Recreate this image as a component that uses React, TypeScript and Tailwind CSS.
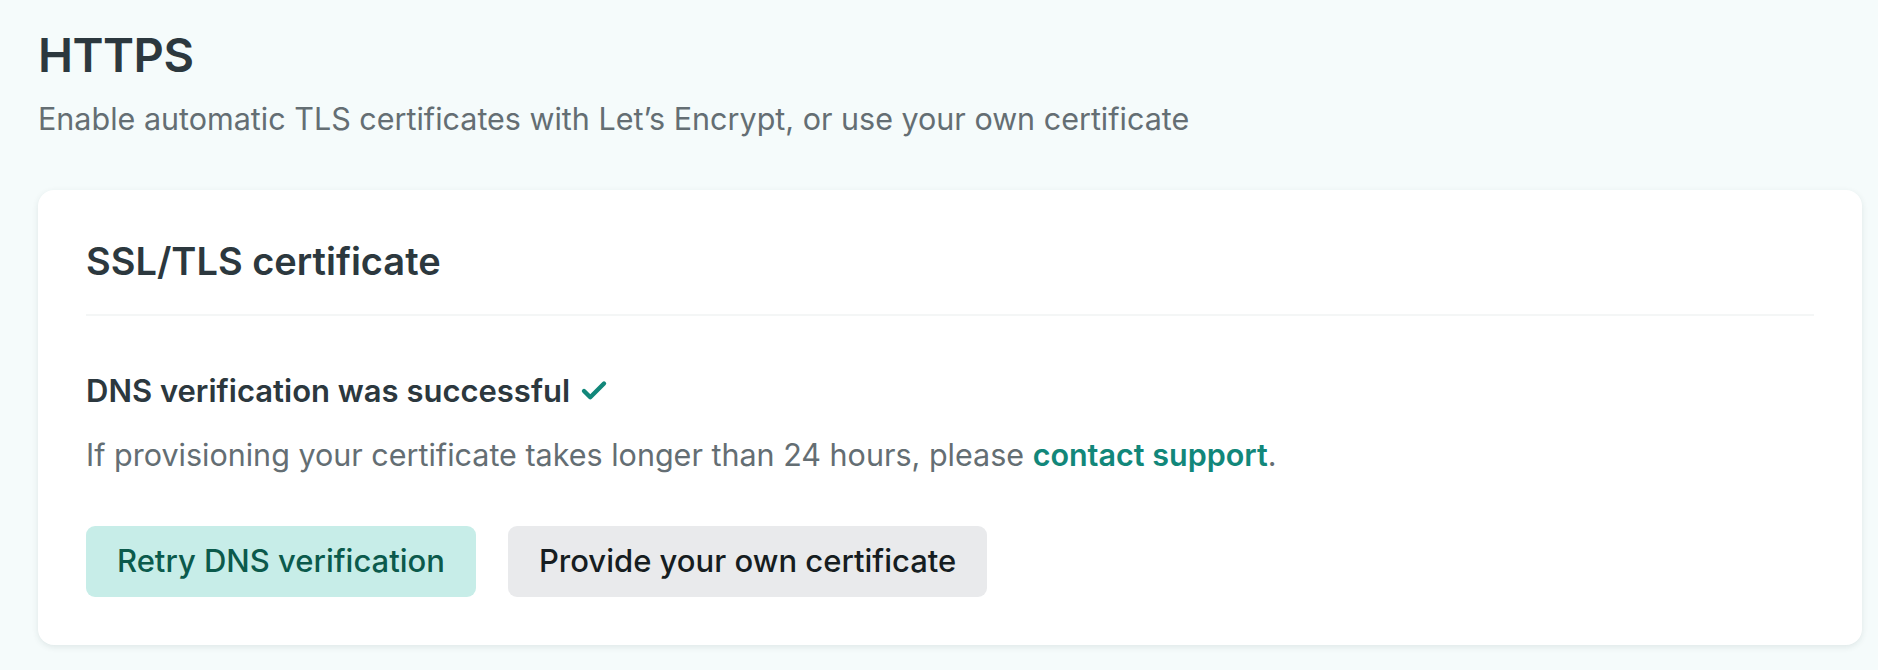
import { Check } from 'lucide-react';

const App = () => {
  return (
    <div className="min-h-screen bg-[#f5fbfb] pl-[38px] pr-[16px] pt-[25px] pb-[24px] font-['Inter',_'Noto_Sans',sans-serif]">
      <h1 className="text-[47px] leading-[60px] font-semibold text-[#2c383e] tracking-[-0.5px]">HTTPS</h1>
      <p className="mt-[14px] text-[30.5px] leading-[40px] text-[#646e73]">
        Enable automatic TLS certificates with Let’s Encrypt, or use your own certificate
      </p>

      <div className="mt-[51px] rounded-[16px] bg-white px-[48px] pt-[45px] pb-[48px] shadow-[0_2px_6px_rgba(30,60,60,0.10)]">
        <h2 className="text-[38px] leading-[52px] font-semibold text-[#2c383e]">SSL/TLS certificate</h2>
        <div className="mt-[27px] h-[2px] bg-[#f4f6f6]" />

        <div className="mt-[55px] flex items-center gap-[9px]">
          <span className="text-[31px] leading-[40px] font-semibold text-[#2c383e]">
            DNS verification was successful
          </span>
          <Check size={30} strokeWidth={3.5} className="text-[#12877a]" />
        </div>
        <p className="mt-[24px] text-[30.5px] leading-[40px] text-[#646e73]">
          If provisioning your certificate takes longer than 24 hours, please{' '}
          <a className="font-semibold text-[#12877a]">contact support</a>.
        </p>

        <div className="mt-[51px] flex gap-[32px]">
          <button className="h-[71px] rounded-[9px] bg-[#c7ede8] px-[31px] text-[31px] font-medium text-[#0b5a4c]">
            Retry DNS verification
          </button>
          <button className="h-[71px] rounded-[9px] bg-[#e9eaec] px-[31px] text-[31px] font-medium text-[#161d21]">
            Provide your own certificate
          </button>
        </div>
      </div>
    </div>
  );
};

export default App;
